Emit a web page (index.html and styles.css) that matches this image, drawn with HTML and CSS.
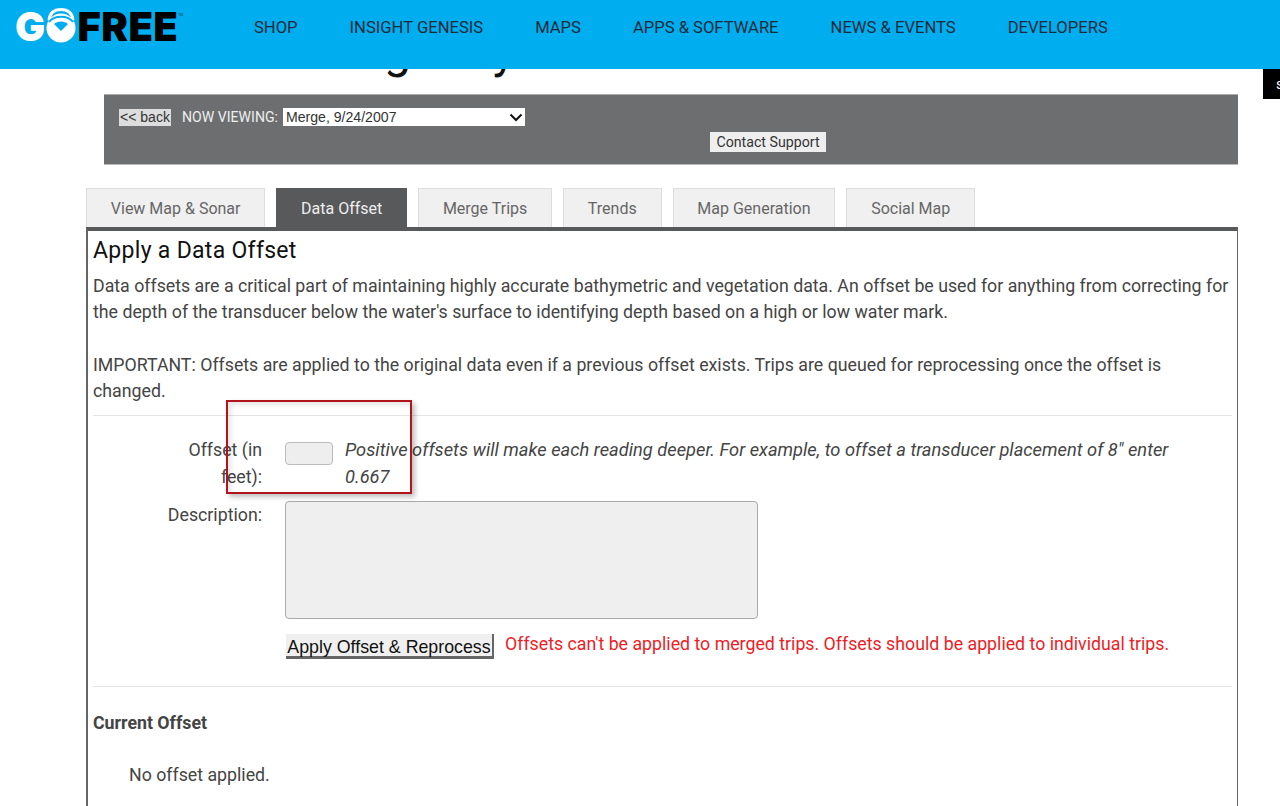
FILE: index.html
```html
<!DOCTYPE html>
<html lang="en">
<head>
<meta charset="utf-8">
<title>Apply a Data Offset</title>
<link rel="stylesheet" href="styles.css">
</head>
<body>
<header class="site-header">
  <a class="logo"><span class="logo-g">G</span><svg class="logo-o" viewBox="0 0 36 36" width="36" height="36" aria-hidden="true"><circle cx="18" cy="21" r="14.5" fill="#fff"/><path d="M6 13 C 7 5, 12 2.5, 18 2.5 C 24 2.5, 29 5, 30 13" fill="none" stroke="#fff" stroke-width="3"/><path d="M6 15 C 11 8, 25 8, 30 15" fill="none" stroke="#00adef" stroke-width="2"/><path d="M11 17 C 14 13.5, 22 13.5, 25 17 L 18 24 Z" fill="#00adef"/></svg><span class="logo-free">FREE</span><sup class="logo-tm">TM</sup></a>
  <nav class="main-nav">
    <a>SHOP</a><a>INSIGHT GENESIS</a><a>MAPS</a><a>APPS &amp; SOFTWARE</a><a>NEWS &amp; EVENTS</a><a>DEVELOPERS</a>
  </nav>
</header>
<div class="side-tab">s</div>
<main class="page">
  <h1 class="page-title">Manage My Data</h1>
  <section class="toolbar">
    <div class="toolbar-row">
      <button class="back-btn">&lt;&lt; back</button>
      <span class="viewing-label">NOW VIEWING:</span>
      <span class="trip-select">Merge, 9/24/2007<svg class="chev" viewBox="0 0 14 9" width="14" height="9" aria-hidden="true"><path d="M1.5 1.5 L7 7 L12.5 1.5" fill="none" stroke="#111" stroke-width="2"/></svg></span>
    </div>
    <div class="toolbar-center"><button class="support-btn">Contact Support</button></div>
  </section>
  <nav class="tabs">
    <a class="tab">View Map &amp; Sonar</a>
    <a class="tab active">Data Offset</a>
    <a class="tab">Merge Trips</a>
    <a class="tab">Trends</a>
    <a class="tab">Map Generation</a>
    <a class="tab">Social Map</a>
  </nav>
  <section class="panel">
    <div class="callout"></div>
    <h2>Apply a Data Offset</h2>
    <p class="intro">Data offsets are a critical part of maintaining highly accurate bathymetric and vegetation data. An offset be used for anything from correcting for the depth of the transducer below the water's surface to identifying depth based on a high or low water mark.</p>
    <p class="intro important">IMPORTANT: Offsets are applied to the original data even if a previous offset exists. Trips are queued for reprocessing once the offset is changed.</p>
    <hr class="rule-a">
    <div class="form-row offset-row">
      <label>Offset (in feet):</label>
      <div class="offset-field"><span class="input"></span><em>Positive offsets will make each reading deeper. For example, to offset a transducer placement of 8" enter 0.667</em></div>
    </div>
    <div class="form-row desc-row">
      <label>Description:</label>
      <div class="textarea"></div>
    </div>
    <div class="form-row action-row">
      <span></span>
      <div class="actions"><button class="apply-btn">Apply Offset &amp; Reprocess</button><span class="error">Offsets can't be applied to merged trips. Offsets should be applied to individual trips.</span></div>
    </div>
    <hr class="rule-b">
    <h3>Current Offset</h3>
    <p class="none">No offset applied.</p>
  </section>
</main>
</body>
</html>
```
FILE: styles.css
```css
* { box-sizing: border-box; }
html, body { margin: 0; height: 806px; overflow: hidden; background: #fff; }
body { font-family: Roboto, "Liberation Sans", sans-serif; color: #444; font-size: 17.75px; position: relative; }
button { font: inherit; border: 0; padding: 0; }

.site-header { position: absolute; top: 0; left: 0; right: 0; height: 69px; background: #00adef; display: flex; align-items: flex-start; z-index: 5; }
.logo { display: flex; align-items: flex-start; margin: 7px 0 0 15px; width: 239px; font-family: Inter, "Liberation Sans", sans-serif; font-weight: 900; font-size: 40px; line-height: 40px; letter-spacing: 0.4px; }
.logo-g { color: #fff; }
.logo-o { margin-left: -3px; margin-right: -1px; flex: none; }
.logo-free { color: #000; }
.logo-tm { color: #333; font-size: 3px; line-height: 8px; margin: 4px 0 0 0; letter-spacing: 0; font-weight: 400; }
.main-nav { display: flex; gap: 52px; margin-top: 18px; font-size: 16.6px; line-height: 19px; color: #1c2b3a; }

.side-tab { position: absolute; top: 69px; right: 0; width: 17px; height: 30px; background: #000; color: #fff; font-size: 14px; line-height: 30px; padding-left: 13px; overflow: hidden; z-index: 4; }

.page { padding-left: 86px; width: 1238px; }
.page-title { margin: 0; height: 94px; padding: 23px 0 0 175px; font-size: 48px; line-height: 56px; font-weight: 400; letter-spacing: 0.6px; color: #111; white-space: nowrap; }

.toolbar { margin-left: 18px; height: 71px; background: #6d6e70; border-top: 1px solid #aaa; border-bottom: 1px solid #bbb; padding: 13px 0 0 15px; }
.toolbar-row { display: flex; align-items: flex-start; font-size: 14.1px; }
.back-btn { background: #ddd; color: #333; height: 17px; width: 52px; font-family: "Liberation Sans", sans-serif; font-size: 14px; line-height: 17px; margin-top: 1px; white-space: nowrap; }
.viewing-label { color: #eee; margin: 0 5px 0 11px; line-height: 18px; }
.trip-select { width: 242px; height: 18px; background: #fff; color: #333; display: flex; align-items: center; justify-content: space-between; padding: 0 2px 0 3px; font-family: "Liberation Sans", sans-serif; font-size: 14.1px; }
.toolbar-center { display: flex; justify-content: center; margin-top: 6px; padding-left: 179px; }
.support-btn { background: #eee; color: #333; width: 116px; height: 20px; font-size: 14.2px; line-height: 21px; }

.tabs { display: flex; gap: 11px; margin-top: 23px; height: 39px; align-items: stretch; }
.tab { display: flex; align-items: center; justify-content: center; background: #f0f0f0; border: 1px solid #ddd; border-bottom: 0; color: #666; font-size: 16px; padding: 0 23.8px; }
.tab.active { background: #58595b; border-color: #58595b; color: #eee; }

.panel { position: relative; height: 600px; border-left: 2px solid #666; border-right: 1px solid #666; border-top: 4px solid #58595b; padding: 0 5px; }
.panel h2 { margin: 0; padding-top: 6px; font-size: 23px; line-height: 27px; font-weight: 400; color: #111; letter-spacing: 0.3px; }
.intro { margin: 9px 0 0; line-height: 26.3px; }
.important { margin-top: 26px; }
.rule-a, .rule-b { border: 0; border-top: 1px solid #e4e4e4; margin: 0; }
.rule-a { margin-top: 11px; }
.form-row { display: grid; grid-template-columns: 100px 1fr; column-gap: 23px; margin-left: 69px; }
.form-row label { text-align: right; line-height: 27px; }
.offset-row { margin-top: 21px; }
.offset-field { display: flex; align-items: flex-start; gap: 12px; }
.offset-field em { flex: 1; font-size: 18.3px; padding-right: 40px; line-height: 26.5px; }
.input { flex: none; margin-top: 5px; width: 48px; height: 23px; background: #eee; border: 1px solid #bbb; border-radius: 4px; }
.desc-row { margin-top: 10px; }
.desc-row label { padding-top: 1px; }
.textarea { width: 473px; height: 118px; background: #efefef; border: 1px solid #aaa; border-radius: 4px; }
.action-row { margin-top: 15px; }
.actions { display: flex; align-items: flex-start; }
.apply-btn { width: 208px; height: 25px; background: #f0f0f0; color: #111; font-family: "Liberation Sans", sans-serif; font-size: 17.8px; line-height: 26px; border-right: 2px solid #666; border-bottom: 3px solid #666; white-space: nowrap; margin-left: 1px; flex: none; }
.error { color: #ee1c25; margin: 0 0 0 11px; line-height: 20px; white-space: nowrap; }
.rule-b { margin-top: 27px; }
.panel h3 { margin: 25px 0 0; font-size: 17.75px; line-height: 22px; font-weight: 700; color: #444; }
.none { margin: 30px 0 0 36px; line-height: 22px; }

.callout { position: absolute; left: 138px; top: 169px; width: 186px; height: 94px; border: 2px solid #b3131b; box-shadow: 3px 3px 5px rgba(0,0,0,.25), inset 3px 3px 5px rgba(0,0,0,.1); z-index: 2; }
```
